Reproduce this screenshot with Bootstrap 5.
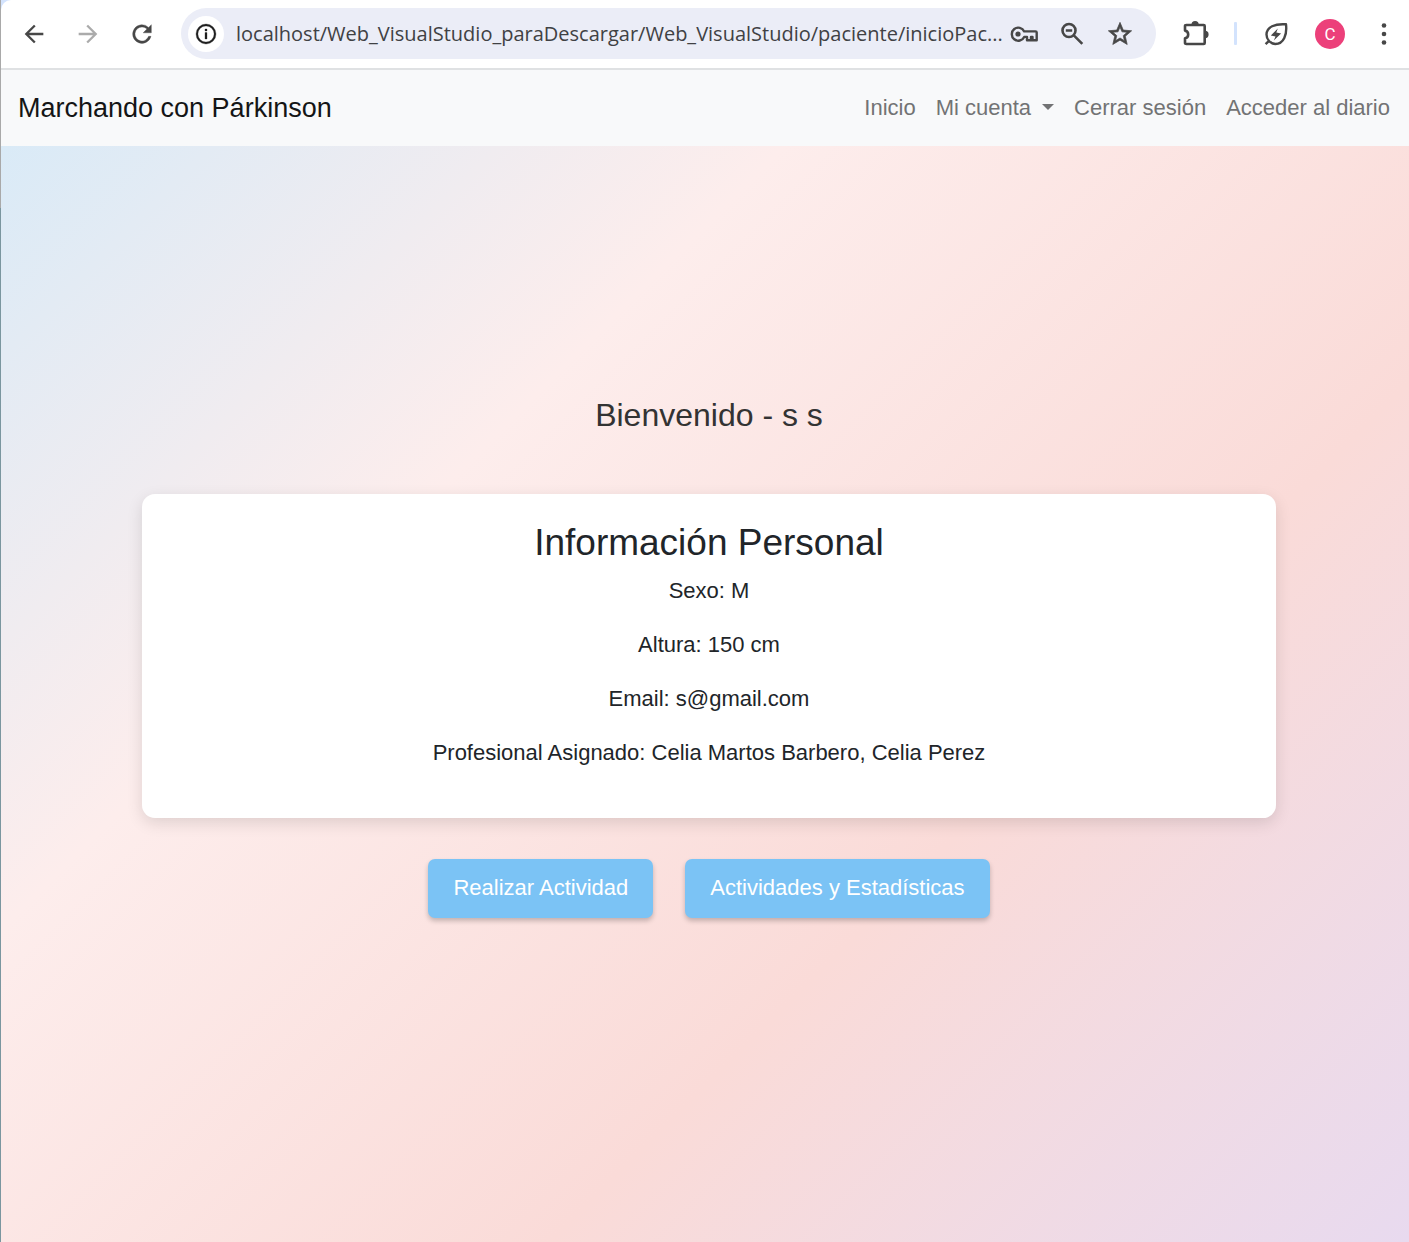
<!DOCTYPE html>
<html lang="es">
<head>
<meta charset="utf-8">
<meta name="viewport" content="width=device-width, initial-scale=1">
<title>Marchando con Párkinson</title>
<link href="https://cdn.jsdelivr.net/npm/bootstrap@5.3.0/dist/css/bootstrap.min.css" rel="stylesheet">
<style>
  :root { --ui-text: 22px; }
  body { font-family: "Liberation Sans", Arial, sans-serif; font-size: var(--ui-text); line-height: 32px; background: linear-gradient(#a9a9a9 208px, #7a969f 208px); padding-left: 1px; }

  /* browser toolbar */
  .toolbar-wrap { background: #d3e3fd; }
  .browser-bar { height: 70px; background: #fff; border-bottom: 2px solid #dfe1e3; border-top-left-radius: 10px; padding: 0 11px 1px 19px; }
  .tool-btn { width: 28px; height: 28px; color: #474747; }
  .tool-btn svg { width: 28px; height: 28px; fill: currentColor; display: block; }
  .tool-btn:disabled { color: #ababab; opacity: 1; }
  .nav-tools { gap: 26px; }
  .bar-tools { gap: 25px; padding-left: 25px; }
  .address-pill { height: 51px; border-radius: 26px; background: #ebedf7; padding: 0 22px 0 7px; margin-left: 25px; }
  .site-info { width: 36px; height: 36px; border-radius: 50%; background: #fff; color: #1f1f1f; }
  .url-box { font-family: "Open Sans", "Noto Sans", sans-serif; font-size: 20px; color: #404144; min-width: 0; margin-left: 12px; outline: 0; text-overflow: ellipsis; }
  .pill-tools { gap: 20px; }
  .bar-split { width: 3px; height: 23px; background: #d3e3fd; border-radius: 1px; }
  .avatar-btn { width: 30px; height: 30px; background: #ec407a; font-family: Roboto, sans-serif; font-size: 17px; line-height: 30px; }

  /* page */
  .page-area { background: linear-gradient(135deg, #d6eaf8, #fdedec, #fadbd8, #e8daef); }
  .site-nav { height: 76px; background: #f8f9fa; padding: 0 9px 0 17px; }
  .site-nav .navbar-brand { font-size: 27px; line-height: 40px; padding: 0; color: #141516; }
  .site-nav .navbar-nav .nav-link { padding: 0 10px; color: #727374; }
  .site-nav .dropdown-toggle::after { margin-left: 11px; vertical-align: 5px; border-width: 6px 6px 0; }
  .home-main { padding: 0 0 76px 8px; }
  .welcome { font-size: 32px; line-height: 40px; color: #333; margin-bottom: 59px; }
  .info-card { width: 81%; border-radius: 13px; padding: 27px; box-shadow: 0 5px 16px rgba(0,0,0,.12); margin-bottom: 41px; }
  .info-card h3 { font-size: 37px; line-height: 44px; margin-bottom: 10px; color: #212529; }
  .info-card p { margin-bottom: 22px; }
  .action-row { gap: 32px; }
  .action-btn { height: 59px; padding: 0 25px; border-radius: 7px; border: 0; background: #7bc3f5; color: #fff; font-size: var(--ui-text); line-height: 32px; box-shadow: 0 3px 5px rgba(0,0,0,.22); }
</style>
<script src="https://cdn.jsdelivr.net/npm/bootstrap@5.3.0/dist/js/bootstrap.bundle.min.js"></script>
</head>
<body class="min-vh-100 d-flex flex-column">
  <div class="toolbar-wrap">
    <div class="browser-bar d-flex align-items-center">
      <div class="nav-tools d-flex">
        <button class="tool-btn btn p-0 border-0" aria-label="Atrás"><svg viewBox="0 0 24 24"><path d="M20 11H7.800l5.600-5.600L12 4l-8 8 8 8 1.400-1.400L7.800 13H20z"/></svg></button>
        <button class="tool-btn btn p-0 border-0" aria-label="Adelante" disabled><svg viewBox="0 0 24 24"><path d="M4 11h12.200l-5.600-5.600L12 4l8 8-8 8-1.400-1.400 5.600-5.600H4z"/></svg></button>
        <button class="tool-btn btn p-0 border-0" aria-label="Recargar"><svg viewBox="0 0 24 24"><path stroke="currentColor" stroke-width=".3" d="M17.650 6.350A8 8 0 1 0 19.730 14h-2.080A6 6 0 1 1 12 6c1.660 0 3.140.69 4.220 1.780L13 11h7V4z"/></svg></button>
      </div>
      <div class="address-pill d-flex align-items-center flex-grow-1">
        <button class="site-info btn p-0 border-0 d-flex align-items-center justify-content-center flex-shrink-0" aria-label="Información del sitio"><svg width="24" height="24" viewBox="0 0 24 24" fill="currentColor" stroke="currentColor" stroke-width=".3"><path d="M12 2a10 10 0 1 0 0 20 10 10 0 0 0 0-20zm0 18.100a8.100 8.100 0 1 1 0-16.200 8.100 8.100 0 0 1 0 16.200zM11 10.500h2V17h-2zM11 7h2v2h-2z"/></svg></button>
        <input class="url-box flex-grow-1 border-0 bg-transparent p-0" type="text" aria-label="Dirección" value="localhost/Web_VisualStudio_paraDescargar/Web_VisualStudio/paciente/inicioPac...">
        <div class="pill-tools d-flex flex-shrink-0">
          <button class="tool-btn btn p-0 border-0" aria-label="Contraseñas"><svg viewBox="0 0 28 28"><g fill="none" stroke="currentColor" stroke-width="2.400" stroke-linejoin="round"><path d="M14.200 11.400A6.500 6.500 0 1 0 14.200 16.900H17V20.200H21V17H22.500V20.200H26.700V12.600Q26.700 11.400 25.500 11.400z"/></g><circle cx="8" cy="14" r="2.600"/></svg></button>
          <button class="tool-btn btn p-0 border-0" aria-label="Zoom"><svg viewBox="0 0 28 28"><g fill="none" stroke="currentColor" stroke-width="2.600"><circle cx="11" cy="10.500" r="6.500"/><path d="M15.800 15.300l8.500 8.500M7.800 10.500h6.400"/></g></svg></button>
          <button class="tool-btn btn p-0 border-0" aria-label="Marcador"><svg viewBox="0 0 24 24"><path stroke="currentColor" stroke-width=".6" d="M22 9.240l-7.190-.62L12 2 9.190 8.630 2 9.240l5.460 4.730L5.820 21 12 17.270 18.180 21l-1.630-7.030L22 9.240zM12 15.400l-3.760 2.270 1-4.280-3.320-2.880 4.380-.38L12 6.100l1.710 4.040 4.380.38-3.320 2.880 1 4.280L12 15.400z"/></svg></button>
        </div>
      </div>
      <div class="bar-tools d-flex align-items-center">
        <button class="tool-btn btn p-0 border-0" aria-label="Extensiones"><svg viewBox="0 0 28 28"><path fill="none" stroke="currentColor" stroke-width="2.600" stroke-linejoin="round" d="M5.400 5H22.700Q23.700 5 23.700 6V23Q23.700 24 22.700 24H5.400Q4 24 4 23V18.200Q7.200 17.600 7.200 14.400T4 10.600V6Q4 5 5.400 5z"/><path d="M10.500 4.500a3.600 3.600 0 0 1 7.200 0zM24 10.800a3.600 3.600 0 0 1 0 7.200z"/></svg></button>
        <span class="bar-split"></span>
        <button class="tool-btn btn p-0 border-0" aria-label="Ahorro de energía"><svg viewBox="0 0 28 28"><path fill="none" stroke="currentColor" stroke-width="2.400" stroke-linejoin="round" d="M24 4.300C13 3.500 4.500 6.800 4.500 14.600a9.400 9.400 0 0 0 8.800 9.400C21.800 24 25.200 14.500 24 4.300zM7 20.800L3.600 24.200"/><path d="M15.800 8.500L8.800 15.600l4.700.8-1.700 4 7.300-7-4.800-.9z"/></svg></button>
        <button class="avatar-btn btn rounded-circle text-white p-0 border-0" aria-label="Perfil">C</button>
        <button class="tool-btn btn p-0 border-0" aria-label="Menú"><svg viewBox="0 0 28 28"><circle cx="14" cy="5.500" r="2.300"/><circle cx="14" cy="14" r="2.300"/><circle cx="14" cy="22.500" r="2.300"/></svg></button>
      </div>
    </div>
  </div>

  <div class="page-area flex-grow-1 d-flex flex-column">
    <nav class="site-nav navbar navbar-expand navbar-light justify-content-between">
      <a class="navbar-brand" href="#">Marchando con Párkinson</a>
      <ul class="navbar-nav">
        <li class="nav-item"><a class="nav-link" href="#">Inicio</a></li>
        <li class="nav-item dropdown"><a class="nav-link dropdown-toggle" href="#" role="button" data-bs-toggle="dropdown" aria-expanded="false">Mi cuenta</a></li>
        <li class="nav-item"><a class="nav-link" href="#">Cerrar sesión</a></li>
        <li class="nav-item"><a class="nav-link" href="#">Acceder al diario</a></li>
      </ul>
    </nav>
    <main class="home-main flex-grow-1 d-flex flex-column align-items-center justify-content-center text-center">
      <h2 class="welcome">Bienvenido - s s</h2>
      <section class="info-card bg-white">
        <h3>Información Personal</h3>
        <p>Sexo: M</p>
        <p>Altura: 150 cm</p>
        <p>Email: s@gmail.com</p>
        <p>Profesional Asignado: Celia Martos Barbero, Celia Perez</p>
      </section>
      <div class="action-row d-flex flex-wrap justify-content-center">
        <button class="action-btn btn">Realizar Actividad</button>
        <button class="action-btn btn">Actividades y Estadísticas</button>
      </div>
    </main>
  </div>
</body>
</html>
